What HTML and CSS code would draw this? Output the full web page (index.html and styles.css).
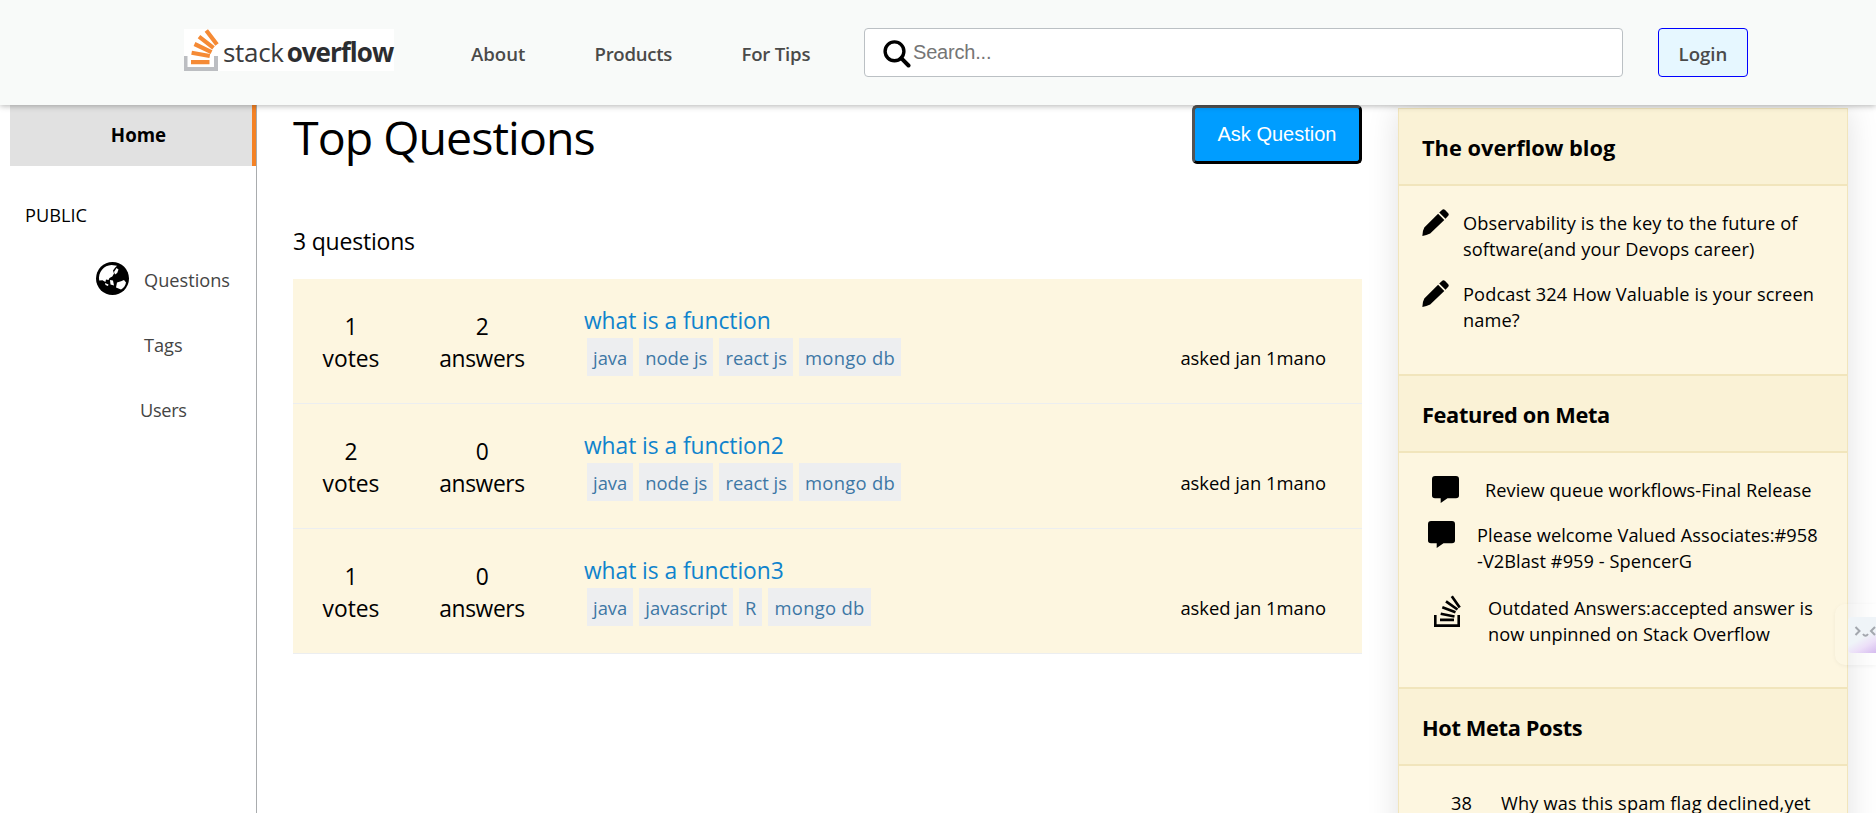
FILE: index.html
```html
<!DOCTYPE html>
<html lang="en">
<head>
<meta charset="utf-8">
<title>Stack Overflow</title>
<link rel="stylesheet" href="styles.css">
</head>
<body>
<svg class="defs" width="0" height="0" aria-hidden="true">
  <symbol id="pencil" viewBox="0 0 27 27"><path d="M17.200 3.600 20 .9Q21.400-.4 23.100 1L26 3.900Q27.500 5.500 26 7.100L23.500 9.700ZM16.100 4.800 22.300 11 8.200 24.600Q4.500 26.500.400 27 .300 22.300 2.300 18.600Z"/></symbol>
  <symbol id="comment" viewBox="0 0 27 27"><path d="M3 0H24Q27 0 27 3V19.500Q27 22.200 24 22.200H15.500L8.700 27V22.200H3Q0 22.200 0 19.500V3Q0 0 3 0Z"/></symbol>
</svg>
<header class="header">
  <a class="logo">
    <svg class="logo-mark" viewBox="0 0 36 42" width="36" height="42">
      <path d="M1.500 27V40H32V27" fill="none" stroke="#bcbec2" stroke-width="4"/>
      <g stroke="#f58a35" stroke-width="4.200" fill="none"><path d="M7 33.200H25.500M7.600 23.700 25.800 27M10.500 15 27.500 23.200M15 7.600 29.500 18.800M22.300 1.500 33 15.500"/></g>
    </svg>
    <span class="logo-text">stack<b>overflow</b></span>
  </a>
  <nav class="nav"><a class="n1">About</a><a class="n2">Products</a><a class="n3">For Tips</a></nav>
  <div class="search">
    <svg viewBox="0 0 28 28" width="28" height="28"><circle cx="11.500" cy="11.300" r="9.400" fill="none" stroke="#000" stroke-width="3.400"/><path d="M18.200 18.200 25.500 25.500" stroke="#000" stroke-width="4" stroke-linecap="round"/></svg>
    <span>Search...</span>
  </div>
  <a class="login">Login</a>
</header>
<div class="page">
  <aside class="side">
    <div class="home">Home</div>
    <div class="public">PUBLIC</div>
    <div class="side-item questions">
      <svg viewBox="0 0 33 33" width="33" height="33"><circle cx="16.500" cy="16.500" r="16.500"/><path fill="#fff" d="M3.200 18.500C1.800 10 8 3.200 15.500 2.900L21 3.700 19 5.800 17 8.500 18 11.500 16.300 14.500 13.500 16 12.500 18 10 17.400 9.400 20 6.500 18.300ZM20.500 6 22.500 7.500 21.200 11 19 12.500 18 10ZM14 18 17 18.500 18 23.500 14.500 22.500ZM9 21 12.500 22.500 12 24 9.500 23ZM21 20.500 25 19.300 28 18 30 20.500C29.500 24 27.500 26 25 27.500L20 25.500Z"/></svg>
      <span>Questions</span>
    </div>
    <div class="side-item tags-link">Tags</div>
    <div class="side-item users-link">Users</div>
  </aside>
  <main class="main">
    <div class="top"><h1>Top Questions</h1><button class="ask">Ask Question</button></div>
    <p class="count">3 questions</p>
    <section class="list">
      <article class="row">
        <div class="stat votes">1<br>votes</div><div class="stat answers">2<br>answers</div>
        <div class="body"><a class="title">what is a function</a><div class="meta"><div class="tags"><span>java</span><span>node js</span><span>react js</span><span>mongo db</span></div><span class="asked">asked jan 1mano</span></div></div>
      </article>
      <article class="row">
        <div class="stat votes">2<br>votes</div><div class="stat answers">0<br>answers</div>
        <div class="body"><a class="title">what is a function2</a><div class="meta"><div class="tags"><span>java</span><span>node js</span><span>react js</span><span>mongo db</span></div><span class="asked">asked jan 1mano</span></div></div>
      </article>
      <article class="row">
        <div class="stat votes">1<br>votes</div><div class="stat answers">0<br>answers</div>
        <div class="body"><a class="title">what is a function3</a><div class="meta"><div class="tags"><span>java</span><span>javascript</span><span>R</span><span>mongo db</span></div><span class="asked">asked jan 1mano</span></div></div>
      </article>
    </section>
  </main>
  <aside class="widget">
    <h2>The overflow blog</h2>
    <div class="box blog">
      <div class="item"><svg width="27" height="27"><use href="#pencil"/></svg><p>Observability is the key to the future of<br>software(and your Devops career)</p></div>
      <div class="item"><svg width="27" height="27"><use href="#pencil"/></svg><p>Podcast 324 How Valuable is your screen<br>name?</p></div>
    </div>
    <h2 class="tight">Featured on Meta</h2>
    <div class="box featured">
      <div class="item review"><svg width="27" height="27"><use href="#comment"/></svg><p>Review queue workflows-Final Release</p></div>
      <div class="item welcome"><svg width="27" height="27"><use href="#comment"/></svg><p>Please welcome Valued Associates:#958<br>-V2Blast #959 - SpencerG</p></div>
      <div class="item outdated"><svg viewBox="0 0 27 32" width="27" height="32"><g fill="none" stroke="#000"><path d="M1.300 20V30.600H24.700V20" stroke-width="2.600"/><path d="M6 24.800H20M6.700 18.700 20.500 21.500M8.300 12.300 21.500 17.300M12 6.300 23.500 14.500M17.800 1.300 25.700 12.500" stroke-width="2.700"/></g></svg><p>Outdated Answers:accepted answer is<br>now unpinned on Stack Overflow</p></div>
    </div>
    <h2 class="tight">Hot Meta Posts</h2>
    <div class="box hot"><div class="item"><span class="score">38</span><p>Why was this spam flag declined,yet</p></div></div>
  </aside>
</div>
<div class="helper"><div class="helper-face"><svg viewBox="0 0 28 36" width="28" height="36" fill="none" stroke="#a3a7ae" stroke-width="2"><path d="M7.500 10 11.500 14 7.500 18M15 17Q17.500 20.500 20 17M27 10 23 14 27 18"/></svg></div></div>
</body>
</html>
```
FILE: styles.css
```css
* { box-sizing: border-box; }
html, body { height: 813px; overflow: hidden; }
body { margin: 0; background: #fff; color: #000; font: 18.2px/26px "Open Sans", "Noto Sans", sans-serif; position: relative; white-space: nowrap; }
h1, h2, p { margin: 0; font-weight: 400; }
.defs { display: block; }
.defs, svg { flex: none; }

.header { position: relative; z-index: 2; display: flex; align-items: flex-start; height: 105px; padding: 28px 0 0 184px; background: #f8faf9; box-shadow: 0 1px 6px rgba(0,0,0,.3); color: #4a4a4a; }
.logo { display: flex; width: 210px; height: 42px; margin-top: 1px; background: #fff; }
.logo-mark { display: block; }
.logo-text { margin-left: 3px; font: 26px/46px "Open Sans", sans-serif; letter-spacing: -.3px; color: #3b3b3d; }
.logo-text b { margin-left: 3px; font-weight: 700; letter-spacing: -1px; color: #2c2d30; }
.nav { display: flex; margin-left: 77px; line-height: 52px; font-size: 18.600px; font-weight: 600; }
.n1 { width: 123.500px; }
.n2 { width: 147px; letter-spacing: -.3px; }
.n3 { width: 122.500px; letter-spacing: -.2px; }
.search { display: flex; width: 759px; height: 49px; padding: 11px 18px; background: #fff; border: 1px solid #bbc0c4; border-radius: 4px; }
.search span { margin-left: 2px; font: 20px/24px "Liberation Sans", Arial, sans-serif; letter-spacing: -.2px; color: #757575; }
.login { width: 90px; height: 49px; margin-left: 35px; border: 1px solid #00f; border-radius: 4px; background: #e6f7ff; line-height: 50px; text-align: center; font-size: 18.600px; font-weight: 600; }

.page { display: flex; align-items: flex-start; height: 708px; overflow: hidden; }
.side { width: 247px; height: 708px; margin-left: 10px; border-right: 1px solid #a9acae; }
.home { height: 61px; padding-left: 15px; background: #e1e1e1; border-right: 4px solid #f48225; text-align: center; font-size: 18.700px; font-weight: 700; line-height: 60px; }
.public { margin-top: 36px; padding-left: 15px; }
.side-item { height: 65px; color: #444; line-height: 36px; }
.questions { display: flex; gap: 15px; margin: 34px 0 0 86px; }
.tags-link { margin-left: 134px; }
.users-link { margin-left: 130px; letter-spacing: -.3px; }

.main { width: 1069px; margin-left: 36px; }
.top { display: flex; justify-content: space-between; height: 120px; }
h1 { font-size: 46.500px; line-height: 65px; letter-spacing: -.95px; }
.ask { width: 170px; height: 59px; padding: 0 0 2px; border: 3px outset #000; border-radius: 5px; background: #009dff; color: #fff; font: 20px/24px "Liberation Sans", Arial, sans-serif; }
.count { height: 54px; font-size: 23px; line-height: 32px; letter-spacing: -.2px; }
.row { display: flex; height: 125px; border-bottom: 1px solid #eceef0; background: #fdf6e0; font-size: 22.800px; }
.stat { padding-top: 32px; line-height: 32px; text-align: center; }
.votes { width: 116px; }
.answers { width: 146px; letter-spacing: -.4px; }
.body { flex: 1; margin-left: 29px; padding-top: 25px; }
.title { display: block; height: 34px; line-height: 34px; letter-spacing: -.05px; color: #0f83cd; }
.meta { display: flex; justify-content: space-between; padding: 0 36px 0 3px; font-size: 18.400px; line-height: 40px; }
.asked { letter-spacing: -.03px; }
.tags { display: flex; gap: 6px; }
.tags span { height: 38px; padding: 0 6px; background: #edeef0; color: #3d77a5; }
.tags span:last-child { letter-spacing: .3px; }

.widget { flex: none; width: 450px; height: 760px; margin: 3px 0 0 36px; border: 1px solid #f1e5bc; background: #fdf6e0; box-shadow: 0 0 30px rgba(0,0,0,.12); }
.widget p { letter-spacing: .13px; }
h2 { height: 77px; padding-left: 23px; border-bottom: 2px solid #f1e5bc; background: #faf2d6; font-size: 21.800px; font-weight: 700; line-height: 77px; }
.tight { letter-spacing: -.36px; }
.box { border-bottom: 2px solid #f1e5bc; }
.item { display: flex; align-items: flex-start; }
.blog { height: 190px; padding: 23px 0 0 23px; }
.blog .item { height: 71px; gap: 14px; }
.blog p { padding-top: 1px; }
.featured { height: 236px; padding-top: 23px; }
.featured p { padding-top: 1px; letter-spacing: .05px; }
.review { height: 45px; padding-left: 33px; gap: 26px; }
.welcome { height: 74px; padding-left: 29px; gap: 22px; }
.outdated { padding-left: 35px; gap: 27px; }
.featured .outdated p { padding-top: 0; }
.hot { padding: 24px 0 0 52px; height: 90px; }
.hot p { letter-spacing: .16px; }
.score { width: 50px; }

.helper { position: absolute; z-index: 3; right: 0; top: 604px; width: 41px; height: 61px; padding: 13px 0 0 13px; border-radius: 10px 0 0 10px; background: rgba(255,255,255,.12); box-shadow: 0 1px 4px rgba(0,0,0,.05); }
.helper-face { height: 36px; border-radius: 4px 0 0 4px; background: linear-gradient(150deg, #eff4f8 55%, #ecdff8 75%, #d5bbef); }
```
